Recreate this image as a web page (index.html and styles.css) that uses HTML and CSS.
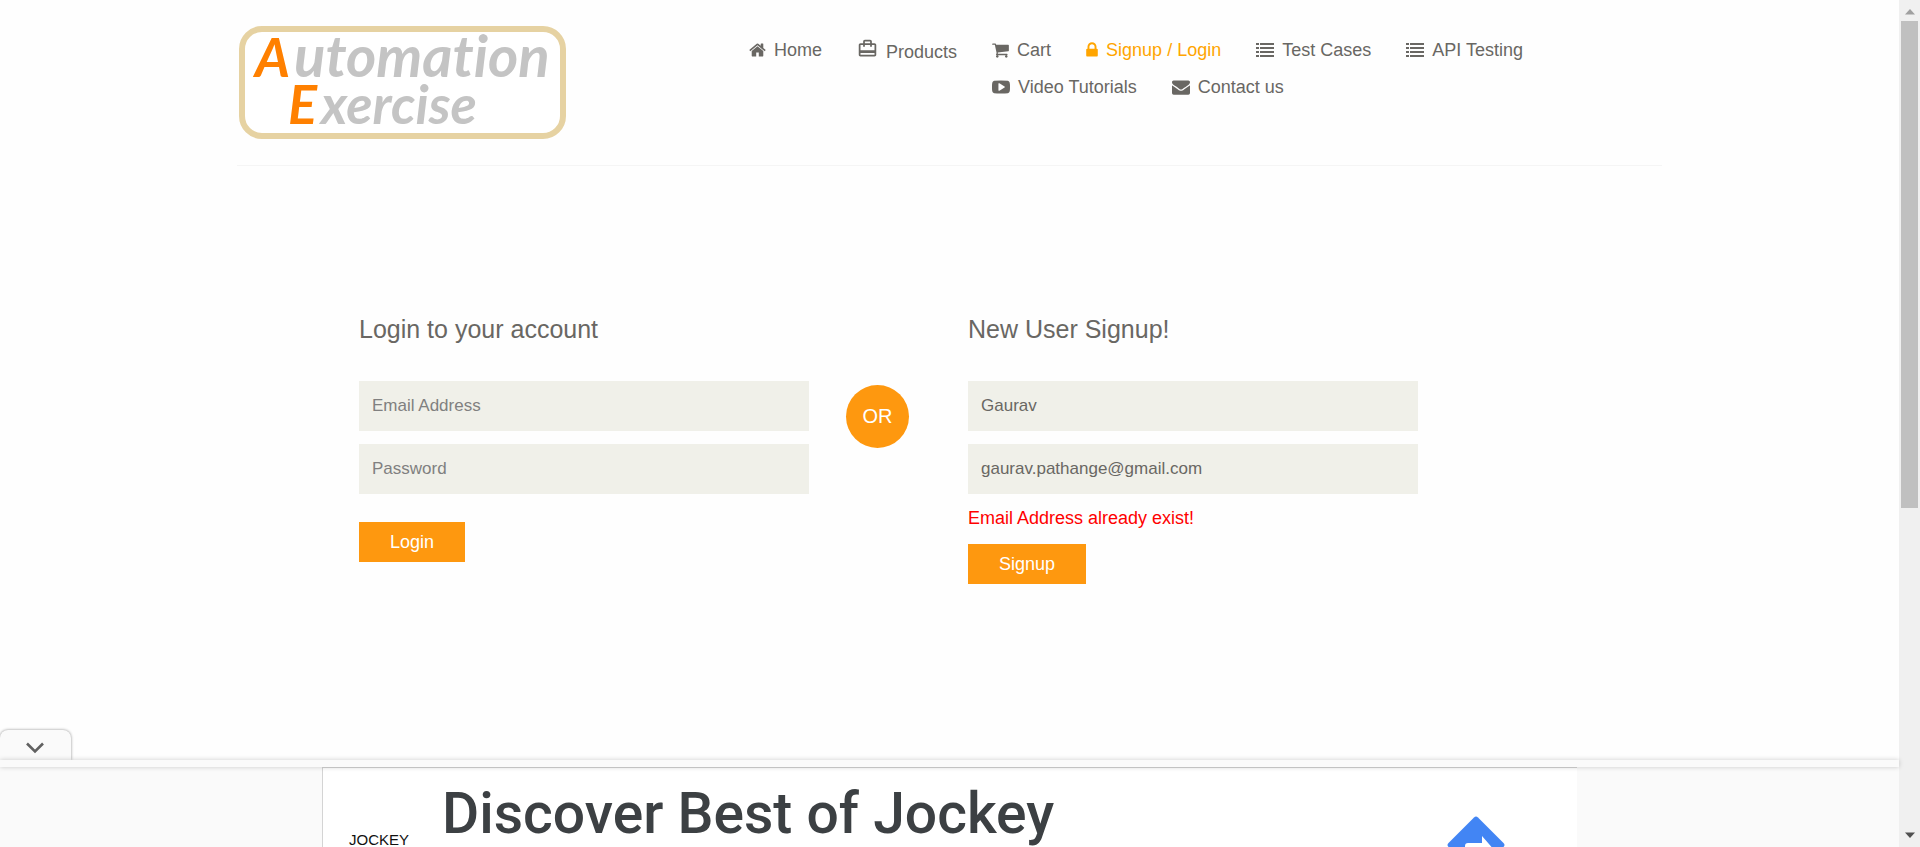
FILE: index.html
```html
<!DOCTYPE html>
<html lang="en">
<head>
<meta charset="utf-8">
<title>Automation Exercise - Signup / Login</title>
<link rel="stylesheet" href="styles.css">
</head>
<body>
<div class="viewport">
  <div class="page">
    <header class="container header">
      <a class="logo" href="#" aria-label="Automation Exercise">
        <svg width="327" height="114" viewBox="0 0 327 114">
          <rect x="3" y="3" width="321" height="107" rx="20" fill="#fff" stroke="#e6d2a2" stroke-width="6"/>
          <text class="logo-text logo-first" y="51"><tspan class="logo-cap" x="16">A</tspan><tspan x="55">utomation</tspan></text>
          <text class="logo-text" y="98"><tspan class="logo-cap" x="49">E</tspan><tspan x="82">xercise</tspan></text>
        </svg>
      </a>
      <nav>
        <ul class="menu">
          <li><a href="#"><svg width="17" height="18" viewBox="64 0 1664 1792"><path d="M1472 992v480q0 26-19 45t-45 19h-384v-384h-256v384h-384q-26 0-45-19t-19-45v-480q0-1 .5-3t.5-3l575-474 575 474q1 2 1 6zm223-69l-62 74q-8 9-21 11h-3q-13 0-21-7l-692-577-692 577q-12 8-24 7-13-2-21-11l-62-74q-8-10-7-23.5t11-21.5l719-599q32-26 76-26t76 26l244 204v-195q0-14 9-23t23-9h192q14 0 23 9t9 23v408l219 182q10 8 11 21.5t-7 23.5z"/></svg>Home</a></li>
          <li><a class="tall" href="#"><svg width="21" height="21" viewBox="0 0 24 24"><path d="M20 6h-3V4c0-1.11-.89-2-2-2H9c-1.11 0-2 .89-2 2v2H4c-1.11 0-2 .89-2 2v11c0 1.11.89 2 2 2h16c1.11 0 2-.89 2-2V8c0-1.11-.89-2-2-2zM9 4h6v2H9V4zm11 15H4v-2h16v2zm0-5H4V8h3v2h2V8h6v2h2V8h3v6z"/></svg>Products</a></li>
          <li><a href="#"><svg width="17" height="18" viewBox="64 0 1664 1792"><path d="M704 1536q0 52-38 90t-90 38-90-38-38-90 38-90 90-38 90 38 38 90zm896 0q0 52-38 90t-90 38-90-38-38-90 38-90 90-38 90 38 38 90zm128-1088v512q0 24-16.5 42.5t-40.5 21.5l-1044 122q13 60 13 70 0 16-24 64h920q26 0 45 19t19 45-19 45-45 19h-1024q-26 0-45-19t-19-45q0-11 8-31.5t16-36 21.5-40 15.5-29.5l-177-823h-204q-26 0-45-19t-19-45 19-45 45-19h256q16 0 28.5 6.5t19.5 15.5 13 24.5 8 26 5.5 29.5 4.5 26h1201q26 0 45 19t19 45z"/></svg>Cart</a></li>
          <li><a class="active" href="#"><svg width="12" height="18" viewBox="320 0 1152 1792"><path d="M640 768h512v-192q0-106-75-181t-181-75-181 75-75 181v192zm832 96v576q0 40-28 68t-68 28h-960q-40 0-68-28t-28-68v-576q0-40 28-68t68-28h32v-192q0-184 132-316t316-132 316 132 132 316v192h32q40 0 68 28t28 68z"/></svg>Signup / Login</a></li>
          <li><a href="#"><svg width="18" height="18" viewBox="0 0 18 18"><path d="M0 2h3v2H0zM4 2h14v2H4zM0 6h3v2H0zM4 6h14v2H4zM0 10h3v2H0zM4 10h14v2H4zM0 14h3v2H0zM4 14h14v2H4z"/></svg>Test Cases</a></li>
          <li><a href="#"><svg width="18" height="18" viewBox="0 0 18 18"><path d="M0 2h3v2H0zM4 2h14v2H4zM0 6h3v2H0zM4 6h14v2H4zM0 10h3v2H0zM4 10h14v2H4zM0 14h3v2H0zM4 14h14v2H4z"/></svg>API Testing</a></li>
          <li><a href="#"><svg width="18" height="18" viewBox="0 0 1792 1792"><path d="M1280 896q0-37-30-54l-512-320q-31-20-65-2-33 18-33 56v640q0 38 33 56 16 8 31 8 20 0 34-10l512-320q30-17 30-54zm512 0q0 96-1 150t-8.500 136.500-22.500 147.500q-16 73-69 123t-124 58q-222 25-671 25t-671-25q-71-8-124.500-58t-69.500-123q-14-65-21.500-147.500t-8.500-136.500-1-150 1-150 8.500-136.500 22.500-147.500q16-73 69-123t124-58q222-25 671-25t671 25q71 8 124.500 58t69.500 123q14 65 21.500 147.500t8.500 136.500 1 150z"/></svg>Video Tutorials</a></li>
          <li><a href="#"><svg width="18" height="18" viewBox="0 0 1792 1792"><path d="M1792 710v794q0 66-47 113t-113 47h-1472q-66 0-113-47t-47-113v-794q44 49 101 87 362 246 497 345 57 42 92.500 65.500t94.500 48 110 24.500h2q51 0 110-24.500t94.500-48 92.500-65.500q170-123 498-345 57-39 100-87zm0-294q0 79-49 151t-122 123q-376 261-468 325-10 7-42.500 31t-54 38.500-52 32.500-57.500 27-50 9h-2q-23 0-50-9t-57.500-27-52-32.500-54-38.500-42.500-31q-91-64-262-182.500t-205-142.500q-62-42-117-115.500t-55-136.500q0-78 41.500-130t118.500-52h1472q65 0 112.500 47t47.500 113z"/></svg>Contact us</a></li>
        </ul>
      </nav>
    </header>

    <main class="container forms">
      <form class="form">
        <h2>Login to your account</h2>
        <input type="email" placeholder="Email Address" aria-label="Email Address">
        <input type="password" placeholder="Password" aria-label="Password">
        <button class="login" type="button">Login</button>
      </form>
      <div class="or">OR</div>
      <form class="form">
        <h2>New User Signup!</h2>
        <input type="text" value="Gaurav" aria-label="Name">
        <input type="email" value="gaurav.pathange@gmail.com" aria-label="Email Address">
        <p class="error">Email Address already exist!</p>
        <button type="button">Signup</button>
      </form>
    </main>

    <aside class="anchor-ad">
      <button class="collapse" type="button" aria-label="Collapse advertisement">
        <svg width="20" height="14" viewBox="0 0 20 14"><path d="M2 2.500l8 8 8-8" fill="none" stroke="#616161" stroke-width="2.600"/></svg>
      </button>
      <div class="ad-bar"></div>
      <div class="ad-area">
        <div class="ad">
          <span class="brand">JOCKEY</span>
          <a class="ad-title" href="#">Discover Best of Jockey</a>
          <svg class="directions" width="58" height="58" viewBox="0 0 58 58">
            <path d="M27 1.500q2-2 4 0L56.500 27q2 2 0 4L31 56.500q-2 2-4 0L1.500 31q-2-2 0-4z" fill="#4285f4"/>
            <path d="M18 39V30q0-3 3-3h14v-7l10 11.500-10 10v-7H24v5z" fill="#fff"/>
          </svg>
        </div>
      </div>
    </aside>
  </div>

  <div class="scrollbar">
    <svg width="10" height="6" viewBox="0 0 10 6"><path d="M0 5.500L5 0l5 5.500z" fill="#a0a0a0"/></svg>
    <div class="track"><div class="thumb"></div></div>
    <svg width="10" height="6" viewBox="0 0 10 6"><path d="M0 0.500L5 6l5-5.500z" fill="#505050"/></svg>
  </div>
</div>
</body>
</html>
```
FILE: styles.css
```css
* {
  box-sizing: border-box;
}

body {
  margin: 0;
  background: #fefefe;
  color: #696763;
  font-family: "Liberation Sans", Arial, sans-serif;
  font-size: 18px;
}

.viewport {
  display: flex;
  height: 100vh;
  overflow: hidden;
}

.page {
  flex: 1;
  min-width: 0;
  display: flex;
  flex-direction: column;
}

.container {
  width: 100%;
  max-width: 1425px;
  margin: 0 auto;
}

/* Header */
.header {
  display: grid;
  grid-template-columns: 512px 1fr;
  padding: 26px 0 25px;
  border-bottom: 1px solid #f5f5f5;
}

.logo {
  padding-left: 2px;
}

.logo svg {
  display: block;
  overflow: visible;
}

.logo-text {
  font: italic bold 54px Lato, sans-serif;
  font-variant-ligatures: none;
  fill: #c4c4c4;
}

.logo-first {
  font-size: 58px;
}

.logo-cap {
  fill: #ff8000;
  font-size: 54px;
}

.menu {
  list-style: none;
  margin: 0;
  padding: 6px 0 0;
}

.menu li {
  float: left;
  padding-right: 35px;
}

.menu a {
  display: flex;
  align-items: center;
  gap: 8px;
  padding: 6px 0;
  line-height: 25px;
  color: inherit;
  text-decoration: none;
}

.menu a.tall {
  align-items: flex-start;
  line-height: 28px;
}

.menu a.active {
  color: #ffa500;
}

.menu svg {
  margin-bottom: 2px;
  fill: currentColor;
}

/* Forms */
.forms {
  display: grid;
  grid-template-columns: minmax(0, 450px) 85px minmax(0, 450px);
  gap: 37px;
  padding: 144px 122px 0;
}

.form {
  display: flex;
  flex-direction: column;
  align-items: flex-start;
}

.form h2 {
  margin: 4px 0 37px;
  font-size: 25px;
  font-weight: 400;
  line-height: 30px;
}

.form input {
  width: 100%;
  height: 50px;
  margin-bottom: 13px;
  padding: 0 13px;
  border: 0;
  background: #f0f0e9;
  color: #696763;
  font-family: inherit;
  font-size: 17px;
}

.form input::placeholder {
  color: #808080;
}

.form button {
  height: 40px;
  padding: 0 31px;
  border: 0;
  background: #fe980f;
  color: #fff;
  font-family: inherit;
  font-size: 18px;
}

.form .login {
  margin-top: 15px;
}

.error {
  margin: -1px 0 13px;
  line-height: 25px;
  color: #f00;
}

.or {
  width: 63px;
  height: 63px;
  margin-top: 75px;
  border-radius: 50%;
  background: #fe980f;
  color: #fff;
  font-size: 20px;
  line-height: 63px;
  text-align: center;
}

/* Advertisement anchored to the bottom edge */
.anchor-ad {
  margin-top: auto;
}

.collapse {
  display: flex;
  align-items: center;
  justify-content: center;
  width: 71px;
  height: 30px;
  padding: 6px 2px 0 0;
  border: 0;
  border-radius: 8px 8px 0 0;
  background: #fafafa;
  box-shadow: 0 0 3px rgba(0, 0, 0, 0.45);
  clip-path: inset(-6px -6px 0 0);
}

.ad-bar {
  position: relative;
  height: 7px;
  background: #fafafa;
  box-shadow: 0 0 5px rgba(0, 0, 0, 0.2);
}

.ad-area {
  height: 80px;
  overflow: hidden;
  background: #fafafa;
}

.ad {
  display: flex;
  width: 1255px;
  max-width: 100%;
  height: 113px;
  margin: 0 auto;
  padding: 0 72px 0 26px;
  border: 1px solid #d4d4d4;
  border-right: 0;
  background: #fff;
}

.brand {
  width: 93px;
  padding-top: 63px;
  color: #111;
  font-size: 15px;
  line-height: 18px;
}

.ad-title {
  flex: 1;
  padding-top: 11px;
  color: #3c4043;
  font: 500 57px/70px Roboto, sans-serif;
  text-decoration: none;
}

.directions {
  margin-top: 48px;
}

/* Window scrollbar */
.scrollbar {
  display: flex;
  flex-direction: column;
  align-items: center;
  width: 21px;
  padding: 9px 0;
  background: #f0f0f0;
}

.track {
  flex: 1;
  width: 17px;
  padding: 6px 0;
}

.thumb {
  height: 60.5%;
  background: #c0c0c0;
}
```
